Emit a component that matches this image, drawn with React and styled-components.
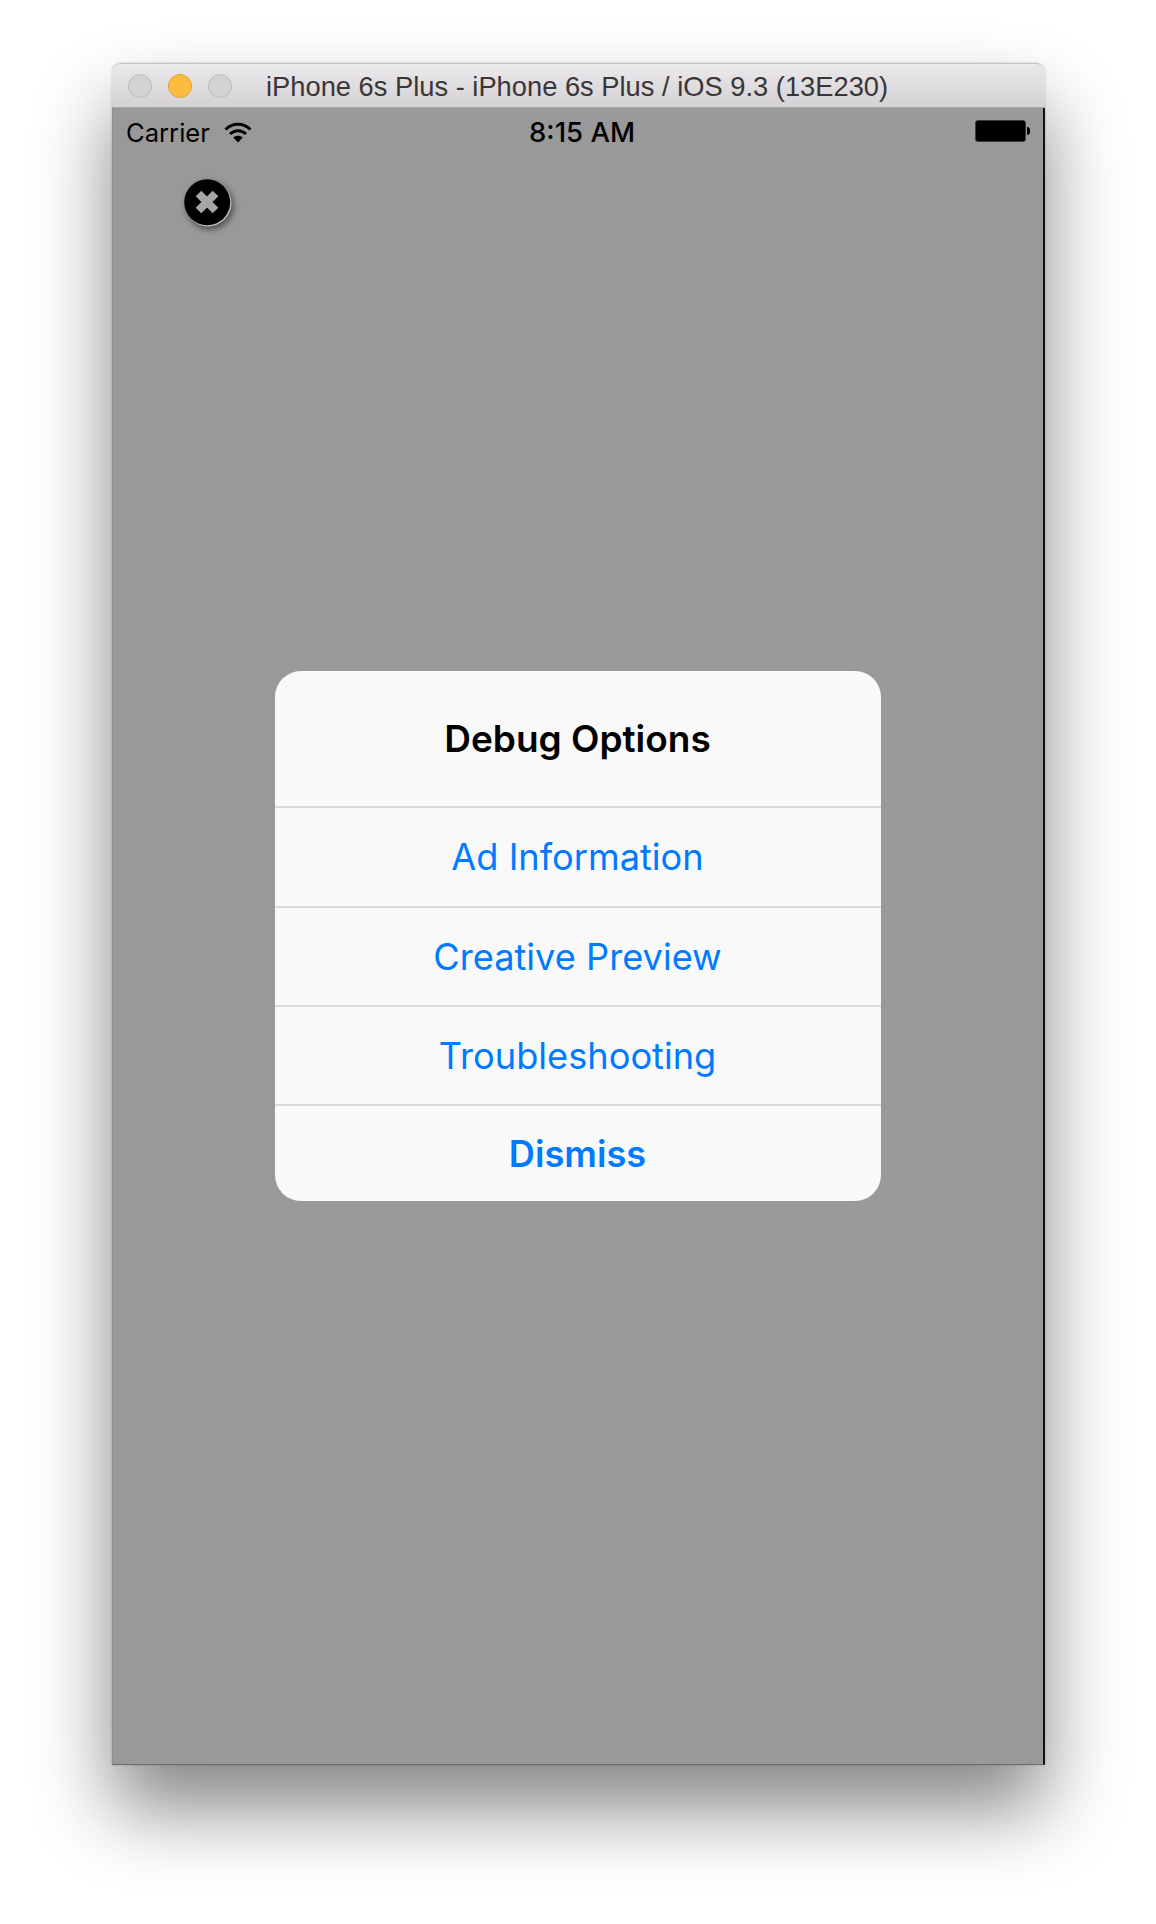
import styled, { createGlobalStyle } from "styled-components";

const GlobalStyle = createGlobalStyle`
  html, body {
    margin: 0;
    background: #fff;
  }
`;

const Page = styled.div`
  box-sizing: border-box;
  width: 1156px;
  height: 1924px;
  padding: 63px 112px 0;
  overflow: hidden;
  font-family: Inter, "Liberation Sans", sans-serif;
`;

const SimWindow = styled.div`
  display: flex;
  flex-direction: column;
  width: 933px;
  height: 1702px;
  border-radius: 9px 9px 0 0;
  box-shadow: 0 44px 78px rgba(0, 0, 0, 0.48), 0 0 2px rgba(0, 0, 0, 0.25);
`;

const TitleBar = styled.div`
  display: flex;
  align-items: center;
  height: 45px;
  padding-left: 16px;
  flex-shrink: 0;
  border-radius: 9px 9px 0 0;
  border-top: 1px solid #c4c2c4;
  border-bottom: 1px solid #a9a8a9;
  box-sizing: border-box;
  background: linear-gradient(#ebe9eb, #d3d1d3);
`;

const Lights = styled.div`
  display: flex;
  gap: 16px;
  margin-right: 34px;
`;

const Light = styled.span`
  box-sizing: border-box;
  width: 24px;
  height: 24px;
  border-radius: 50%;
  background: ${(p) => (p.$active ? "#fdbc40" : "#d3d3d3")};
  border: 1px solid ${(p) => (p.$active ? "#e0a030" : "#bdbdbd")};
`;

const WindowTitle = styled.div`
  font-family: "Liberation Sans", Arial, sans-serif;
  font-size: 27.3px;
  color: #3a3638;
  white-space: nowrap;
  padding-top: 2px;
`;

const Screen = styled.div`
  position: relative;
  display: flex;
  flex: 1;
  align-items: center;
  justify-content: center;
  background: #999;
  border-right: 2px solid #111;
  border-bottom: 1px solid #6c6c6c;
  border-left: 1px solid #8e8e8e;
`;

const StatusBar = styled.div`
  position: absolute;
  top: 0;
  left: 0;
  right: 0;
  display: grid;
  grid-template-columns: 1fr auto 1fr;
  align-items: center;
  height: 48px;
  padding: 0 13px;
  color: #000;
  font-size: 25.6px;
`;

const Carrier = styled.div`
  display: flex;
  align-items: center;
  gap: 14px;
`;

const Clock = styled.div`
  font-size: 27.5px;
  font-weight: 500;
  margin-left: 8px;
`;

const BatteryWrap = styled.div`
  display: flex;
  align-items: center;
  justify-self: end;
  margin-top: -2px;
`;

const BatteryBody = styled.span`
  box-sizing: border-box;
  width: 51px;
  height: 22px;
  border-radius: 3px;
  background: #000;
  border: 1px solid #3a3a3a;
`;

const BatteryNub = styled.span`
  width: 3px;
  height: 8px;
  margin-left: 1px;
  border-radius: 0 4px 4px 0;
  background: #000;
`;

const CloseButton = styled.button`
  position: absolute;
  top: 71px;
  left: 71px;
  width: 48px;
  height: 48px;
  padding: 0;
  border: 0;
  background: transparent;
  filter: drop-shadow(2px 3px 3px rgba(0, 0, 0, 0.5));
`;

const Alert = styled.div`
  width: 606px;
  height: 530px;
  margin-left: -1px;
  border-radius: 26px;
  overflow: hidden;
  background: #f9f9f9;
  display: flex;
  flex-direction: column;
`;

const AlertTitle = styled.div`
  height: 135px;
  padding-top: 48px;
  box-sizing: border-box;
  text-align: center;
  font-size: 37px;
  line-height: 40px;
  font-weight: 600;
  color: #000;
`;

const AlertAction = styled.div`
  display: flex;
  align-items: center;
  justify-content: center;
  box-sizing: border-box;
  height: ${(p) => p.$height}px;
  border-top: 2px solid #dadade;
  font-size: 36.2px;
  font-weight: ${(p) => (p.$bold ? 600 : 400)};
  color: #007aff;
`;

function WifiIcon() {
  return (
    <svg width="28" height="21" viewBox="0 0 28 21" fill="none" stroke="#000" strokeWidth="3">
      <path d="M1.5 7.5C8.5 .5 19.5 .5 26.5 7.5" />
      <path d="M6 12C10.5 7.5 17.5 7.5 22 12" />
      <path d="M14 20.5 9.2 15.6C12 13 16 13 18.8 15.6Z" fill="#000" stroke="none" />
    </svg>
  );
}

function CloseIcon() {
  return (
    <svg width="48" height="48" viewBox="0 0 48 48">
      <circle cx="24" cy="24" r="23.5" fill="#b8b8b8" />
      <circle cx="23.2" cy="23.2" r="23" fill="#000" />
      <path d="M14.5 14.5 31.5 31.5M31.5 14.5 14.5 31.5" stroke="#a6a6a6" strokeWidth="8" />
    </svg>
  );
}

export default function App() {
  return (
    <Page>
      <GlobalStyle />
      <SimWindow>
        <TitleBar>
          <Lights>
            <Light />
            <Light $active />
            <Light />
          </Lights>
          <WindowTitle>iPhone 6s Plus - iPhone 6s Plus / iOS 9.3 (13E230)</WindowTitle>
        </TitleBar>
        <Screen>
          <StatusBar>
            <Carrier>
              Carrier
              <WifiIcon />
            </Carrier>
            <Clock>8:15 AM</Clock>
            <BatteryWrap>
              <BatteryBody />
              <BatteryNub />
            </BatteryWrap>
          </StatusBar>
          <CloseButton aria-label="Close">
            <CloseIcon />
          </CloseButton>
          <Alert>
            <AlertTitle>Debug Options</AlertTitle>
            <AlertAction $height={100}>Ad Information</AlertAction>
            <AlertAction $height={99}>Creative Preview</AlertAction>
            <AlertAction $height={99}>Troubleshooting</AlertAction>
            <AlertAction $height={97} $bold>Dismiss</AlertAction>
          </Alert>
        </Screen>
      </SimWindow>
    </Page>
  );
}
